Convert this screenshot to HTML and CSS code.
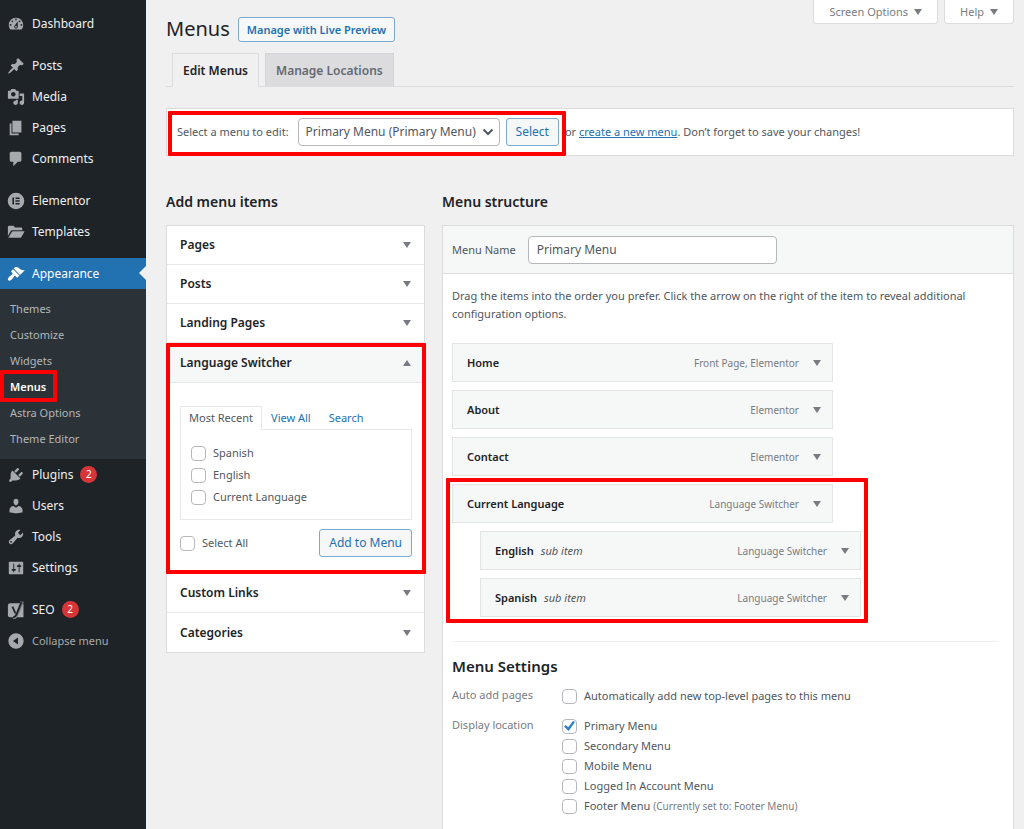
FILE: index.html
```html
<!DOCTYPE html>
<html lang="en">
<head>
<meta charset="utf-8">
<meta name="viewport" content="width=device-width, initial-scale=1">
<title>Menus</title>
<link rel="stylesheet" href="styles.css">
</head>
<body>
<nav class="sidebar" aria-label="Main menu">
  <ul class="nav-group">
    <li><a class="nav-item" href="#"><svg viewBox="0 0 20 20"><path d="M3.76 16h12.48c1.1-1.37 1.76-3.11 1.76-5 0-4.42-3.58-8-8-8s-8 3.58-8 8c0 1.89.66 3.63 1.76 5zM10 4c.55 0 1 .45 1 1s-.45 1-1 1-1-.45-1-1 .45-1 1-1zM6 6c.55 0 1 .45 1 1s-.45 1-1 1-1-.45-1-1 .45-1 1-1zm8 0c.55 0 1 .45 1 1s-.45 1-1 1-1-.45-1-1 .45-1 1-1zm-5.37 5.55L12 7v6c0 1.1-.9 2-2 2s-2-.9-2-2c0-.57.24-1.08.63-1.45zM4 10c.55 0 1 .45 1 1s-.45 1-1 1-1-.45-1-1 .45-1 1-1zm12 0c.55 0 1 .45 1 1s-.45 1-1 1-1-.45-1-1 .45-1 1-1zm-5 3c0-.55-.45-1-1-1s-1 .45-1 1 .45 1 1 1 1-.45 1-1z" fill-rule="evenodd"/></svg>Dashboard</a></li>
  </ul>
  <ul class="nav-group">
    <li><a class="nav-item" href="#"><svg viewBox="0 0 20 20"><path d="M10.44 3.02l1.82-1.82 6.36 6.35-1.83 1.82c-1.05-.68-2.48-.57-3.41.36l-.75.75c-.92.93-1.04 2.35-.35 3.41l-1.83 1.82-2.41-2.41-2.8 2.79c-.42.42-3.38 2.71-3.8 2.29s1.86-3.39 2.28-3.81l2.79-2.79L4.1 9.36l1.83-1.82c1.05.69 2.48.57 3.4-.36l.75-.75c.93-.92 1.05-2.35.36-3.41z"/></svg>Posts</a></li>
    <li><a class="nav-item" href="#"><svg viewBox="0 0 20 20"><path fill-rule="evenodd" d="M13 11V4c0-.55-.45-1-1-1h-1.67L9 1H5L3.67 3H2c-.55 0-1 .45-1 1v7c0 .55.45 1 1 1h10c.55 0 1-.45 1-1zM7 4.5c1.38 0 2.5 1.12 2.5 2.5S8.380 9.500 7 9.500 4.500 8.380 4.500 7 5.620 4.500 7 4.500zM14 6h5v10.500c0 1.380-1.120 2.500-2.500 2.500S14 17.880 14 16.500s1.120-2.500 2.500-2.500c.17 0 .34.02.5.05V9h-3V6zm-4 8.050V13h2v3.500c0 1.380-1.120 2.500-2.500 2.500S7 17.880 7 16.500 8.120 14 9.500 14c.17 0 .34.02.5.05z"/></svg>Media</a></li>
    <li><a class="nav-item" href="#"><svg viewBox="0 0 20 20"><path d="M6 15V2h10v13H6zm-1 1h8v2H3V5h2v11z"/></svg>Pages</a></li>
    <li><a class="nav-item" href="#"><svg viewBox="0 0 20 20"><path d="M5 2h9c1.1 0 2 .9 2 2v7c0 1.1-.9 2-2 2h-2l-5 5v-5H5c-1.1 0-2-.9-2-2V4c0-1.1.9-2 2-2z"/></svg>Comments</a></li>
  </ul>
  <ul class="nav-group">
    <li><a class="nav-item" href="#"><svg viewBox="0 0 20 20"><path fill-rule="evenodd" d="M10 .8a9.200 9.200 0 1 0 0 18.400A9.200 9.200 0 0 0 10 .8zM6 6h1.800v8H6zM9.400 6H14v1.700H9.400zM9.400 9.150H14v1.700H9.400zM9.400 12.300H14V14H9.400z"/></svg>Elementor</a></li>
    <li><a class="nav-item" href="#"><svg viewBox="0 0 20 20"><path d="M1 14.500V4.600C1 3.600 1.600 3 2.500 3h4.700L9 5h6.600c.9 0 1.400.6 1.400 1.400V8H6.300c-1.100 0-1.800.4-2.300 1.300z"/><path d="M1.500 16.500l3.800-6.500c.3-.6.7-.9 1.300-.9h12.200c.5 0 .7.400.4.900l-3.200 5.600c-.3.600-.8.900-1.400.9z"/></svg>Templates</a></li>
  </ul>
  <ul class="nav-group">
    <li>
      <a class="nav-item current" href="#"><svg viewBox="0 0 20 20"><path d="M14.480 11.060L7.410 3.990l1.500-1.500c.5-.56 2.300-.47 3.510.32 1.210.8 1.430 1.280 2.910 2.100 1.180.64 2.450 1.260 4.450.85zm-.71.71L6.700 4.700 4.930 6.470c-.39.39-.39 1.020 0 1.410l1.060 1.060c.39.39.39 1.030 0 1.420-.6.6-1.430 1.110-2.210 1.690-.35.26-.7.53-1.010.84C1.430 14.230.4 16.080 1.400 17.070c.99 1 2.840-.03 4.180-1.360.31-.31.58-.66.85-1.020.57-.78 1.080-1.610 1.690-2.210.39-.39 1.020-.39 1.410 0l1.060 1.060c.39.39 1.020.39 1.410 0z"/></svg>Appearance</a>
      <ul class="submenu">
        <li><a href="#">Themes</a></li>
        <li><a href="#">Customize</a></li>
        <li><a href="#">Widgets</a></li>
        <li><a class="active marked marked-nav" href="#">Menus</a></li>
        <li><a href="#">Astra Options</a></li>
        <li><a href="#">Theme Editor</a></li>
      </ul>
    </li>
    <li><a class="nav-item" href="#"><svg viewBox="0 0 20 20"><path d="M13.110 4.360L9.870 7.600 8 5.730l3.240-3.240c.35-.34 1.050-.2 1.560.32.52.51.66 1.210.31 1.550zm-8 1.770l.91-1.120 9.010 9.010-1.190.84c-.71.71-2.630 1.160-3.820 1.160H6.140L4.900 17.260c-.59.59-1.540.59-2.120 0-.59-.58-.59-1.530 0-2.120l1.240-1.240v-3.880c0-1.130.4-3.190 1.090-3.890zm7.260 3.970l3.240-3.240c.34-.35 1.040-.21 1.550.31.52.51.66 1.210.31 1.550l-3.240 3.250z"/></svg>Plugins<span class="count">2</span></a></li>
    <li><a class="nav-item" href="#"><svg viewBox="0 0 20 20"><path d="M10 9.250c-2.270 0-2.730-3.440-2.730-3.440C7 4.020 7.820 2 9.970 2c2.160 0 2.980 2.020 2.710 3.810 0 0-.41 3.440-2.680 3.440zm0 2.570L12.720 10c2.390 0 4.520 2.330 4.520 4.530v2.490s-3.650 1.130-7.240 1.130c-3.650 0-7.240-1.130-7.240-1.130v-2.490c0-2.250 1.940-4.480 4.470-4.480z"/></svg>Users</a></li>
    <li><a class="nav-item" href="#"><svg viewBox="0 0 20 20"><path d="M16.680 9.770c-1.340 1.340-3.300 1.670-4.950.99l-5.410 6.520c-.99.99-2.590.99-3.580 0s-.99-2.590 0-3.570l6.520-5.420c-.68-1.650-.35-3.610.99-4.950 1.280-1.280 3.120-1.620 4.720-1.060l-2.890 2.890 2.820 2.820 2.860-2.870c.53 1.580.18 3.390-1.080 4.650zM3.810 16.210c.4.39 1.040.39 1.430 0 .4-.4.4-1.040 0-1.430-.39-.4-1.030-.4-1.430 0-.39.39-.39 1.030 0 1.430z"/></svg>Tools</a></li>
    <li><a class="nav-item" href="#"><svg viewBox="0 0 20 20"><path d="M18 16V4c0-.55-.45-1-1-1H3c-.55 0-1 .45-1 1v12c0 .55.45 1 1 1h14c.55 0 1-.45 1-1zM8 11h1c.55 0 1 .45 1 1s-.45 1-1 1H8v1.500c0 .28-.22.5-.5.5s-.5-.22-.5-.5V13H6c-.55 0-1-.45-1-1s.45-1 1-1h1V5.500c0-.28.22-.5.5-.5s.5.220.5.500V11zm5-2h-1c-.55 0-1-.45-1-1s.45-1 1-1h1V5.500c0-.28.22-.5.5-.5s.5.220.5.500V7h1c.55 0 1 .45 1 1s-.45 1-1 1h-1v5.500c0 .28-.22.5-.5.5s-.5-.22-.5-.5V9z"/></svg>Settings</a></li>
  </ul>
  <ul class="nav-group">
    <li><a class="nav-item" href="#"><svg viewBox="0 0 20 20"><path d="M3.500 2.500h13c1 0 1.800.8 1.800 1.800V18H3.200C2 18 1 17 1 15.800V5c0-1.400 1-2.500 2.500-2.500z"/><path d="M17 .3L11 15c-.9 2.400-2 3.900-4.500 4.200" fill="none" stroke="#787c82" stroke-width="3.600"/><path d="M6 6.200l3.400 7.600M16.300.6L10.600 15c-.8 1.900-1.700 2.900-3.800 3.100" fill="none" stroke="#1d2327" stroke-width="2"/></svg>SEO<span class="count">2</span></a></li>
    <li><button class="nav-item collapse" type="button"><svg viewBox="0 0 20 20"><path fill-rule="evenodd" d="M10 1.500a8.500 8.500 0 1 0 0 17 8.500 8.500 0 0 0 0-17zm2.200 4.700v7.600L6.600 10z"/></svg>Collapse menu</button></li>
  </ul>
</nav>

<main class="content">
  <header class="page-head">
    <h1>Menus</h1>
    <a class="button preview" href="#">Manage with Live Preview</a>
    <div class="screen-meta">
      <button type="button">Screen Options<i class="arrow"></i></button>
      <button type="button">Help<i class="arrow"></i></button>
    </div>
  </header>

  <nav class="tabs" aria-label="Menu views">
    <a class="tab selected" href="#">Edit Menus</a>
    <a class="tab" href="#">Manage Locations</a>
  </nav>

  <form class="manage">
    <div class="chooser marked marked-chooser">
      <label for="menu-select">Select a menu to edit:</label>
      <span class="select-wrap">
        <select id="menu-select"><option>Primary Menu (Primary Menu)</option></select>
        <svg viewBox="0 0 12 12"><path d="M1.500 3.500L6 8l4.500-4.500" fill="none" stroke="#50575e" stroke-width="2"/></svg>
      </span>
      <button class="button" type="button">Select</button>
    </div>
    <p>or <a href="#">create a new menu</a>. Don’t forget to save your changes!</p>
  </form>

  <div class="columns">
    <section class="add-items">
      <h2>Add menu items</h2>
      <div class="accordion">
        <button class="acc-head" type="button">Pages<i class="arrow"></i></button>
        <button class="acc-head" type="button">Posts<i class="arrow"></i></button>
        <button class="acc-head" type="button">Landing Pages<i class="arrow"></i></button>
        <div class="acc-open marked marked-panel">
          <button class="acc-head open" type="button" aria-expanded="true">Language Switcher<i class="arrow up"></i></button>
          <form class="acc-body">
            <div class="mini-tabs">
              <a class="on" href="#">Most Recent</a>
              <a href="#">View All</a>
              <a href="#">Search</a>
            </div>
            <div class="choices">
              <label><input type="checkbox">Spanish</label>
              <label><input type="checkbox">English</label>
              <label><input type="checkbox">Current Language</label>
            </div>
            <div class="acc-actions">
              <label><input type="checkbox">Select All</label>
              <button class="button" type="button">Add to Menu</button>
            </div>
          </form>
        </div>
        <button class="acc-head" type="button">Custom Links<i class="arrow"></i></button>
        <button class="acc-head" type="button">Categories<i class="arrow"></i></button>
      </div>
    </section>

    <section class="structure">
      <h2>Menu structure</h2>
      <form class="panel">
        <div class="panel-head">
          <label for="menu-name">Menu Name</label>
          <input id="menu-name" type="text" value="Primary Menu">
        </div>
        <div class="panel-body">
          <p class="hint">Drag the items into the order you prefer. Click the arrow on the right of the item to reveal additional configuration options.</p>
          <ul class="menu-items">
            <li><strong>Home</strong><span>Front Page, Elementor</span><button type="button" aria-label="Edit Home"><i class="arrow"></i></button></li>
            <li><strong>About</strong><span>Elementor</span><button type="button" aria-label="Edit About"><i class="arrow"></i></button></li>
            <li><strong>Contact</strong><span>Elementor</span><button type="button" aria-label="Edit Contact"><i class="arrow"></i></button></li>
          </ul>
          <ul class="menu-items marked marked-items">
            <li><strong>Current Language</strong><span>Language Switcher</span><button type="button" aria-label="Edit Current Language"><i class="arrow"></i></button></li>
            <li class="sub"><strong>English</strong><em>sub item</em><span>Language Switcher</span><button type="button" aria-label="Edit English"><i class="arrow"></i></button></li>
            <li class="sub"><strong>Spanish</strong><em>sub item</em><span>Language Switcher</span><button type="button" aria-label="Edit Spanish"><i class="arrow"></i></button></li>
          </ul>
          <div class="settings">
            <h2>Menu Settings</h2>
            <fieldset>
              <legend>Auto add pages</legend>
              <div class="options">
                <label><input type="checkbox">Automatically add new top-level pages to this menu</label>
              </div>
            </fieldset>
            <fieldset>
              <legend>Display location</legend>
              <div class="options">
                <label><input type="checkbox" checked>Primary Menu</label>
                <label><input type="checkbox">Secondary Menu</label>
                <label><input type="checkbox">Mobile Menu</label>
                <label><input type="checkbox">Logged In Account Menu</label>
                <label><input type="checkbox">Footer Menu <small>(Currently set to: Footer Menu)</small></label>
              </div>
            </fieldset>
          </div>
        </div>
      </form>
    </section>
  </div>
</main>
</body>
</html>
```
FILE: styles.css
```css
* { box-sizing: border-box; }

body {
  display: flex;
  min-height: 100vh;
  margin: 0;
  background: #f0f0f0;
  color: #50575e;
  font: 11px/18px "Noto Sans", "Open Sans", sans-serif;
}

ul, h1, h2, p, fieldset { margin: 0; padding: 0; }
ul { list-style: none; }
button, input, select { margin: 0; font: inherit; color: inherit; }
button { padding: 0; border: 0; background: none; text-align: left; }
a { color: #2271b1; }

/* Red callout frames drawn over the content */
.marked { position: relative; }
.marked::after {
  content: "";
  position: absolute;
  border: 4px solid #f00;
  border-radius: 1px;
  pointer-events: none;
}
.marked-nav::after { inset: -4px 89px -2px 0; }
.marked-chooser::after { inset: -7px -7px -10px -9px; }
.marked-panel::after { inset: 0 -2px 0 -1px; }
.marked-items::after { inset: -6px -7px -6px -6px; }

/* Sidebar */
.sidebar {
  flex: none;
  width: 146px;
  padding-top: 8px;
  background: #1d2327;
}
.nav-group { margin-bottom: 11px; }
.nav-item {
  display: flex;
  align-items: center;
  gap: 7px;
  width: 100%;
  height: 31px;
  padding-left: 7px;
  color: #f0f0f1;
  font-size: 12px;
  text-decoration: none;
}
.nav-item svg { width: 18px; height: 18px; fill: #a7aaad; }
.nav-item.current { position: relative; background: #2271b1; color: #fff; }
.nav-item.current svg { fill: #fff; }
.nav-item.current::after {
  content: "";
  position: absolute;
  top: 8px;
  right: 0;
  border: 7px solid transparent;
  border-left: 0;
  border-right-color: #f0f0f0;
}
.nav-item.collapse { color: #a7aaad; font-size: 11px; }
.count {
  width: 17px;
  height: 17px;
  border-radius: 50%;
  background: #d63638;
  color: #fff;
  font-size: 10px;
  line-height: 17px;
  text-align: center;
}
.submenu { padding: 7px 0; background: #2c3338; }
.submenu a {
  display: block;
  padding: 4px 0 4px 10px;
  color: #b2b6b9;
  text-decoration: none;
}
.submenu .active { color: #fff; font-weight: 600; }

/* Page head */
.content {
  display: flex;
  flex: 1;
  flex-direction: column;
  min-width: 0;
  padding: 0 10px 0 20px;
}
.page-head { display: flex; height: 53px; align-items: center; gap: 8px; padding-top: 5px; }
h1 { color: #1d2327; font-size: 20px; font-weight: 400; line-height: 28px; }
.button {
  height: 28px;
  padding: 0 9px;
  border: 1px solid #7aaad2;
  border-radius: 3px;
  background: #f6f7f7;
  color: #2271b1;
  font-size: 12px;
  line-height: 26px;
  text-decoration: none;
  white-space: nowrap;
}
.preview { height: 25px; padding: 0 8px; font-size: 11px; font-weight: 600; line-height: 23px; }
.screen-meta { display: flex; align-self: flex-start; gap: 6px; margin: -5px 0 0 auto; }
.screen-meta button {
  display: flex;
  align-items: center;
  gap: 6px;
  height: 24px;
  padding: 0 15px;
  border: 1px solid #dcdcde;
  border-top: 0;
  border-radius: 0 0 4px 4px;
  background: #fff;
  color: #787c82;
}
.arrow {
  flex: none;
  border: 4px solid transparent;
  border-top: 6px solid #787c82;
  border-bottom: 0;
}
.arrow.up { border-top: 0; border-bottom: 6px solid #787c82; }

.tabs { display: flex; gap: 6px; padding-left: 6px; border-bottom: 1px solid #dcdcde; }
.tab {
  padding: 8px 10px 6px;
  border: 1px solid #d4d5d8;
  border-bottom: 0;
  background: #dcdcde;
  color: #646970;
  font-size: 12px;
  font-weight: 600;
  text-decoration: none;
}
.tab.selected {
  margin-bottom: -1px;
  border-color: #dcdcde;
  background: #f0f0f0;
  color: #1d2327;
}

.manage {
  display: flex;
  align-items: center;
  gap: 6px;
  height: 48px;
  margin-top: 21px;
  padding-left: 10px;
  border: 1px solid #dcdcde;
  background: #fff;
  white-space: nowrap;
}
.chooser { display: flex; align-items: center; gap: 6px; }
.chooser label { padding-right: 3px; }
.select-wrap { position: relative; }
.select-wrap svg { position: absolute; top: 8px; right: 6px; width: 12px; height: 12px; pointer-events: none; }
select {
  appearance: none;
  display: block;
  width: 202px;
  height: 28px;
  padding: 0 18px 0 7px;
  border: 1px solid #b5b7ba;
  border-radius: 4px;
  background: #fff;
  font-size: 12px;
}

/* Columns */
.columns { display: grid; flex: 1; grid-template-columns: 259px minmax(0, 1fr); gap: 17px; margin-top: 36px; }
h2 { color: #1d2327; font-size: 14px; font-weight: 600; line-height: 20px; }
.accordion { margin-top: 13px; border: 1px solid #dcdcde; background: #fff; }
.acc-head {
  display: flex;
  align-items: center;
  justify-content: space-between;
  width: 100%;
  height: 39px;
  padding: 0 13px;
  border-bottom: 1px solid #e8e8e9;
  color: #1d2327;
  font-size: 12px;
  font-weight: 600;
}
.acc-head.open { height: 40px; background: #f6f7f7; }
.accordion > .acc-head:last-child { border-bottom: 0; }
.acc-body { padding: 23px 12px 17px 13px; }
.mini-tabs { display: flex; }
.mini-tabs a {
  padding: 2px 8px;
  border: 1px solid transparent;
  border-bottom: 0;
  text-decoration: none;
}
.mini-tabs .on { margin-bottom: -1px; border-color: #e8e8e9; background: #fff; color: #50575e; }
.choices { padding: 12px 10px 11px; border: 1px solid #e8e8e9; }
.choices label { height: 22px; }
label { display: flex; align-items: center; }
.acc-actions { display: flex; align-items: center; justify-content: space-between; padding-top: 9px; }

input[type="checkbox"] {
  appearance: none;
  display: grid;
  flex: none;
  place-items: center;
  width: 15px;
  height: 15px;
  margin-right: 7px;
  border: 1px solid #b5b7ba;
  border-radius: 4px;
  background: #fff;
}
input[type="checkbox"]:checked::before {
  content: "";
  width: 11px;
  height: 10px;
  background: #2f80c2;
  clip-path: polygon(0 55%, 16% 40%, 38% 62%, 82% 0, 100% 10%, 42% 100%);
}

.structure { display: flex; flex-direction: column; }
.panel { flex: 1; margin-top: 13px; border: 1px solid #dcdcde; border-bottom: 0; background: #fff; }
.panel-head {
  display: flex;
  align-items: center;
  gap: 12px;
  height: 48px;
  padding: 0 9px;
  border-bottom: 1px solid #dcdcde;
  background: #f6f7f7;
}
.panel-head input {
  width: 249px;
  height: 28px;
  padding: 0 8px;
  border: 1px solid #b5b7ba;
  border-radius: 4px;
  background: #fff;
  font-size: 12px;
}
.panel-body { padding: 13px 14px 0 9px; }
.menu-items { display: grid; gap: 8px; width: 381px; margin-top: 8px; }
.hint + .menu-items { margin-top: 20px; }
.marked-items { width: 409px; }
.menu-items li {
  display: flex;
  align-items: center;
  width: 381px;
  height: 39px;
  padding: 0 11px 0 14px;
  border: 1px solid #e3e4e6;
  background: #f6f7f7;
}
.menu-items .sub { margin-left: 28px; }
.menu-items strong { color: #1d2327; font-weight: 600; }
.menu-items em { margin-left: 7px; }
.menu-items span { margin-left: auto; color: #787c82; font-size: 10px; }
.menu-items button { display: flex; margin-left: 14px; }

.settings { margin-top: 24px; padding-top: 14px; border-top: 1px solid #f0f0f1; }
.settings h2 { font-size: 15px; }
fieldset { display: grid; grid-template-columns: 110px 1fr; margin-top: 10px; border: 0; }
legend { float: left; padding: 0; color: #787c82; }
.options label { height: 20px; white-space: pre; }
small { font-size: 10px; color: #787c82; }
```
